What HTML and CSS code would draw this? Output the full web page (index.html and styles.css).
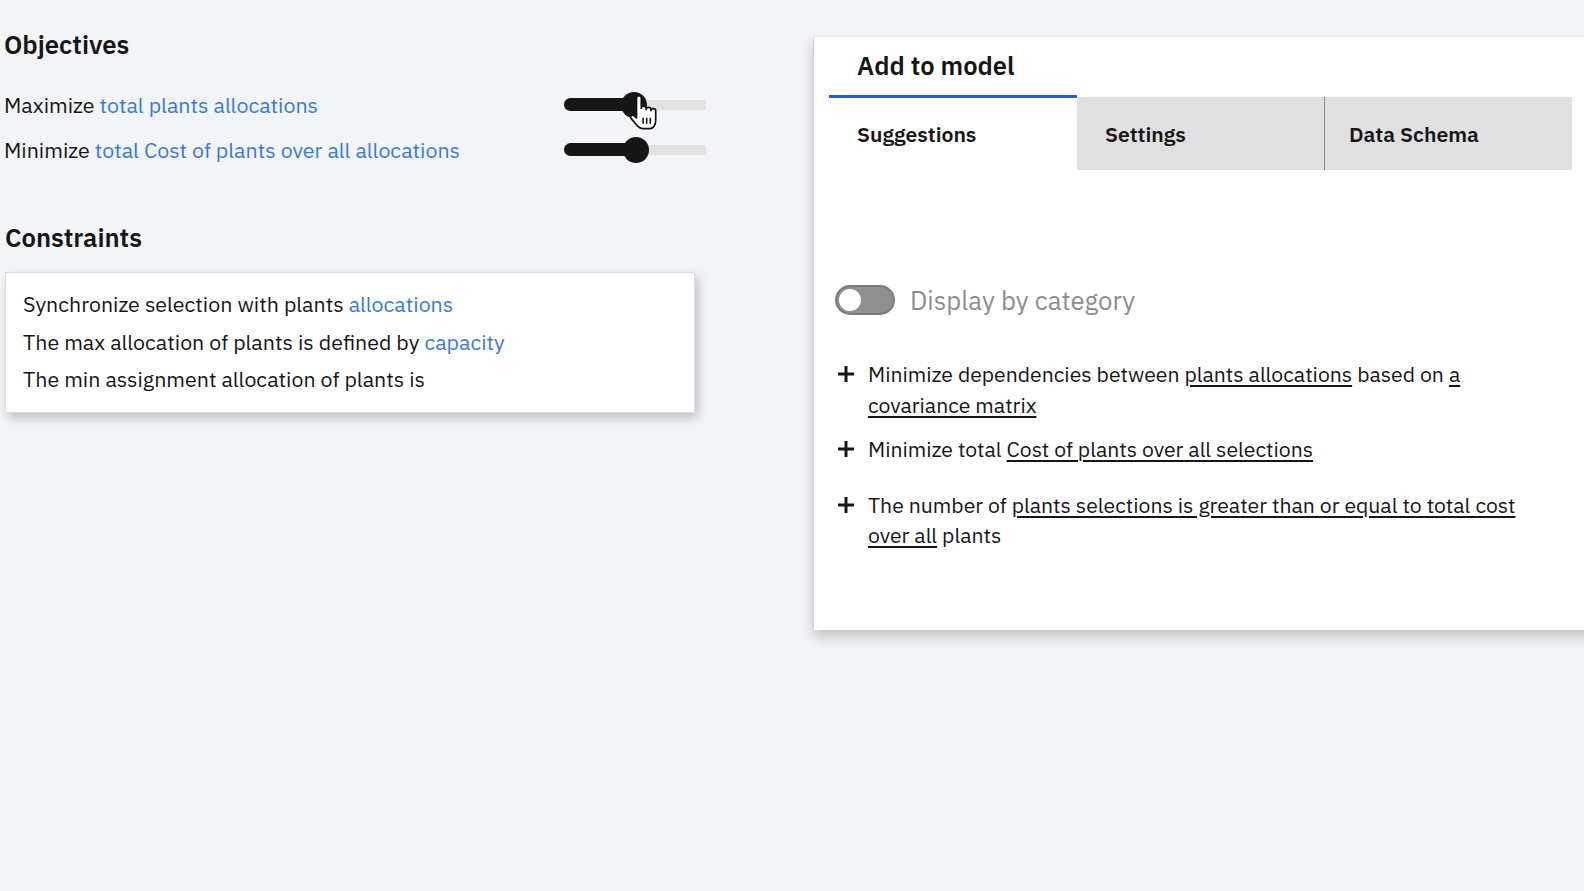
FILE: index.html
```html
<!DOCTYPE html>
<html lang="en">
<head>
    <meta charset="UTF-8">
    <meta name="viewport" content="width=device-width, initial-scale=1.0">
    <title>Model builder</title>
    <link rel="stylesheet" href="styles.css">
</head>
<body>
    <div class="page">
        <!-- Objectives et constraints -->
        <div class="model">
            <h2 class="section-title">Objectives</h2>
            <div class="objective">
                <span>Maximize <a class="ref">total plants allocations</a></span>
                <div class="slider">
                    <div class="fill" style="width: 49%"></div>
                    <div class="thumb" style="left: 49%"></div>
                    <svg class="cursor" width="29" height="36" viewBox="0 0 24 30">
                        <path d="M7 2.5C7 1.4 7.9.5 9 .5s2 .9 2 2V11c0-1 .9-1.7 2-1.7s2 .7 2 1.7v1c0-1 .9-1.7 2-1.7s2 .7 2 1.7v1c0-1 .9-1.7 2-1.7s2 .7 2 1.7v8c0 4-2 7-5 7h-6c-2 0-3-1-4-2l-5.5-6.5c-.7-.9-.5-2.1.5-2.5.8-.4 1.8-.1 2.5.6L7 19z" fill="#fff" stroke="#111" stroke-width="1.4" stroke-linejoin="round"/>
                        <path d="M12.5 19v5M15.5 19v5M18.5 19v5" stroke="#111" stroke-width="1.3"/>
                    </svg>
                </div>
            </div>
            <div class="objective">
                <span>Minimize <a class="ref">total Cost of plants over all allocations</a></span>
                <div class="slider">
                    <div class="fill" style="width: 51%"></div>
                    <div class="thumb" style="left: 51%"></div>
                </div>
            </div>

            <h2 class="section-title constraints-title">Constraints</h2>
            <div class="constraint-card">
                <p>Synchronize selection with plants <a class="ref">allocations</a></p>
                <p>The max allocation of plants is defined by <a class="ref">capacity</a></p>
                <p>The min assignment allocation of plants is</p>
            </div>
        </div>

        <!-- Panneau Add to model -->
        <div class="panel">
            <div class="panel-title">Add to model</div>
            <div class="tabs">
                <div class="tab active">Suggestions</div>
                <div class="tab">Settings</div>
                <div class="tab">Data Schema</div>
            </div>

            <div class="category-toggle">
                <div class="switch"><div class="knob"></div></div>
                <span>Display by category</span>
            </div>

            <div class="suggestions">
                <div class="suggestion">
                    <svg class="plus" width="18" height="18" viewBox="0 0 18 18"><path d="M9 1v16M1 9h16" stroke="#161616" stroke-width="3"/></svg>
                    <p>Minimize dependencies between <u>plants allocations</u> based on <u>a covariance matrix</u></p>
                </div>
                <div class="suggestion">
                    <svg class="plus" width="18" height="18" viewBox="0 0 18 18"><path d="M9 1v16M1 9h16" stroke="#161616" stroke-width="3"/></svg>
                    <p>Minimize total <u>Cost of plants over all selections</u></p>
                </div>
                <div class="suggestion spaced">
                    <svg class="plus" width="18" height="18" viewBox="0 0 18 18"><path d="M9 1v16M1 9h16" stroke="#161616" stroke-width="3"/></svg>
                    <p>The number of <u>plants selections is greater than or equal to total cost over all</u> plants</p>
                </div>
            </div>
        </div>
    </div>
</body>
</html>
```

FILE: styles.css
```css
body {
    margin: 0;
    height: 891px;
    overflow: hidden;
    background-color: #f2f4f8;
    color: #161616;
    font-family: "IBM Plex Sans", Roboto, "Liberation Sans", sans-serif;
}
.page {
    display: flex;
    align-items: flex-start;
}
.model {
    flex: none;
    width: 702px;
    padding: 30px 0 0 4px;
}
.section-title {
    margin: 0 0 22px;
    font-size: 25.7px;
    line-height: 30px;
    font-weight: 600;
}
.constraints-title {
    margin: 51px 0 19px 1px;
}
.objective {
    display: grid;
    grid-template-columns: 560px 142px;
    align-items: center;
    height: 45px;
    font-size: 21.4px;
}
.ref {
    color: #3a7bd5;
}
.slider {
    position: relative;
    height: 26px;
    border-radius: 6px;
    background: linear-gradient(#e2e2e2, #e2e2e2) no-repeat center / 100% 10px;
}
.fill {
    position: absolute;
    left: 0;
    top: 6px;
    height: 13px;
    border-radius: 7px;
    background: #161616;
}
.thumb {
    position: absolute;
    top: 0;
    width: 26px;
    height: 26px;
    margin-left: -13px;
    border-radius: 50%;
    background: #161616;
}
.cursor {
    position: absolute;
    left: 64px;
    top: 3px;
}
.constraint-card {
    width: 690px;
    margin-left: 1px;
    padding: 13px 0;
    box-sizing: border-box;
    background: white;
    border: 1px solid #dcdcdc;
    box-shadow: 3px 5px 10px rgba(0, 0, 0, 0.22);
    font-size: 21.4px;
}
.constraint-card p {
    margin: 0;
    padding-left: 17px;
    line-height: 37.5px;
}
.panel {
    flex: none;
    width: 800px;
    height: 594px;
    margin: 36px 0 0 107px;
    box-sizing: border-box;
    padding-left: 15px;
    background: white;
    border-left: 1px solid #d4d4d4;
    border-top: 1px solid #e6e6e6;
    box-shadow: 0 7px 12px rgba(0, 0, 0, 0.2);
}
.panel-title {
    padding: 14px 0 14px 28px;
    font-size: 25.5px;
    line-height: 30px;
    font-weight: 600;
}
.tabs {
    display: grid;
    grid-template-columns: 248px 247px 248px;
    height: 75px;
}
.tab {
    display: flex;
    align-items: center;
    padding-left: 28px;
    margin-top: 2px;
    background: #e0e0e0;
    font-size: 21.2px;
    font-weight: 600;
}
.tab + .tab + .tab {
    border-left: 1px solid #8d8d8d;
    padding-left: 24px;
}
.tab.active {
    margin-top: 0;
    background: white;
    border-top: 3px solid #1d5fd8;
}
.category-toggle {
    display: flex;
    align-items: center;
    gap: 15px;
    margin: 115px 0 0 6px;
    height: 30px;
    font-size: 25.8px;
    color: #8d8d8d;
}
.switch {
    width: 60px;
    height: 30px;
    box-sizing: border-box;
    padding: 2px;
    border-radius: 15px;
    background: #8f8f8f;
    border: 2px solid #7b7b7b;
}
.knob {
    width: 22px;
    height: 22px;
    border-radius: 50%;
    background: white;
}
.suggestions {
    margin: 44px 0 0 8px;
}
.suggestion {
    display: flex;
    gap: 13px;
    margin-bottom: 14px;
    font-size: 21.2px;
}
.suggestion.spaced {
    margin-top: 25px;
}
.suggestion p {
    margin: 0;
    width: 675px;
    line-height: 30.5px;
}
.plus {
    flex: none;
    margin-top: 6px;
}
u {
    text-underline-offset: 3px;
}
```
